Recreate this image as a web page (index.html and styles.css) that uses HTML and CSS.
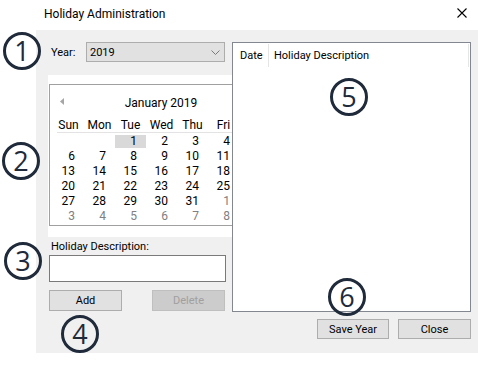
FILE: index.html
```html
<!DOCTYPE html>
<html>
<head>
<meta charset="utf-8">
<link rel="stylesheet" href="styles.css">
</head>
<body>
<div class="window">
  <div class="titlebar">
    <span class="title">Holiday Administration</span>
    <svg class="close-x" width="10" height="10" viewBox="0 0 10 10"><path d="M0.5 0.5 L9.5 9.5 M9.5 0.5 L0.5 9.5" stroke="#000" stroke-width="1.1" fill="none"/></svg>
  </div>
  <div class="panel">
    <div class="main">
      <div class="left">
        <div class="year-row">
          <span class="year-label">Year:</span>
          <div class="combo">
            <span class="combo-value">2019</span>
            <svg class="chevron" width="9" height="5" viewBox="0 0 9 5"><path d="M0.5 0.5 L4.5 4.5 L8.5 0.5" stroke="#7a7a7a" stroke-width="1" fill="none"/></svg>
          </div>
        </div>
        <div class="cal-area">
          <div class="calendar">
            <div class="cal-head">
              <svg class="prev" width="4" height="7" viewBox="0 0 4 7"><path d="M4 0 L0 3.5 L4 7 Z" fill="#a6a6a6"/></svg>
              <span class="month">January 2019</span>
            </div>
            <div class="names">
              <span>Sun</span><span>Mon</span><span>Tue</span><span>Wed</span><span>Thu</span><span>Fri</span>
            </div>
            <div class="days">
              <span></span><span></span><span class="sel">1</span><span>2</span><span>3</span><span>4</span>
              <span>6</span><span>7</span><span>8</span><span>9</span><span>10</span><span>11</span>
              <span>13</span><span>14</span><span>15</span><span>16</span><span>17</span><span>18</span>
              <span>20</span><span>21</span><span>22</span><span>23</span><span>24</span><span>25</span>
              <span>27</span><span>28</span><span>29</span><span>30</span><span>31</span><span class="trail">1</span>
              <span class="trail">3</span><span class="trail">4</span><span class="trail">5</span><span class="trail">6</span><span class="trail">7</span><span class="trail">8</span>
            </div>
          </div>
        </div>
        <div class="desc-label">Holiday Description:</div>
        <div class="textbox"></div>
        <div class="btn-row">
          <div class="btn">Add</div>
          <div class="btn disabled">Delete</div>
        </div>
      </div>
      <div class="listview">
        <div class="lv-header">
          <span class="col-date">Date</span>
          <span class="col-desc">Holiday Description</span>
        </div>
      </div>
    </div>
    <div class="footer">
      <div class="btn btn-save">Save Year</div>
      <div class="btn btn-close">Close</div>
    </div>
  </div>
  <div class="marker m1">1</div>
  <div class="marker m2">2</div>
  <div class="marker m3">3</div>
  <div class="marker m4">4</div>
  <div class="marker m5">5</div>
  <div class="marker m6">6</div>
</div>
</body>
</html>
```
FILE: styles.css
```css
* { box-sizing: border-box; }
html, body { margin: 0; padding: 0; background: #fff; }
body {
  font-family: Roboto, "Liberation Sans", sans-serif;
  font-size: 11px;
  color: #000;
}
.window {
  position: relative;
  width: 478px;
  height: 366px;
  overflow: hidden;
  background: #fff;
}
.titlebar {
  height: 30px;
  display: flex;
  align-items: center;
  justify-content: space-between;
  padding: 0 11px 2px 44px;
}
.title { font-size: 12px; }
.close-x { margin-top: -2px; }

.panel {
  margin-left: 36px;
  width: 442px;
  height: 323px;
  background: #f0f0f0;
  padding: 12px 0 0 12px;
}
.main { display: flex; height: 270px; }
.left { width: 184px; overflow: hidden; }

.year-row { display: flex; align-items: center; height: 20px; }
.year-label { width: 38px; padding-left: 3px; }
.combo {
  width: 139px;
  height: 20px;
  background: #e1e1e1;
  border: 1px solid #adadad;
  display: flex;
  align-items: center;
  justify-content: space-between;
  padding: 0 4px 0 3px;
}
.chevron { margin-top: 1px; }

.cal-area {
  margin-top: 13px;
  height: 162px;
  background: #fff;
  padding: 9px 0 0 1px;
  overflow: hidden;
}
.calendar {
  width: 224px;
  height: 142px;
  border: 1px solid #a0a0a0;
  padding: 0 3px;
}
.cal-head {
  height: 34px;
  position: relative;
  display: flex;
  align-items: center;
  justify-content: center;
}
.prev { position: absolute; left: 7px; top: 13px; }
.month { font-size: 12px; margin-top: 2px; }
.names {
  display: grid;
  grid-template-columns: 27px repeat(5, 31px);
  height: 14px;
  margin-left: 4px;
  border-bottom: 1px solid #e3e3e3;
  font-size: 12px;
  line-height: 12px;
}
.names span { text-align: center; }
.names span:first-child { margin-left: -4px; }
.days {
  display: grid;
  grid-template-columns: repeat(6, 31px);
  grid-auto-rows: 15px;
  padding-top: 1px;
  font-size: 12px;
}
.days span {
  text-align: right;
  padding-right: 9px;
  line-height: 15px;
}
.days span.sel {
  background: #d9d9d9;
  border-top: 1px solid #fff;
  border-bottom: 1px solid #fff;
  line-height: 13px;
}
.days span.trail { color: #808080; }

.desc-label { height: 18px; padding: 4px 0 0 3px; line-height: 12px; }
.textbox {
  width: 177px;
  height: 27px;
  margin-left: 1px;
  background: #fff;
  border: 1px solid #7a7a7a;
}
.btn-row { display: flex; gap: 30px; margin-top: 8px; padding-left: 1px; }
.btn {
  width: 73px;
  height: 21px;
  background: #e1e1e1;
  border: 1px solid #adadad;
  display: flex;
  align-items: center;
  justify-content: center;
}
.btn.disabled { background: #cccccc; border-color: #bfbfbf; color: #a0a0a0; }

.listview {
  width: 239px;
  height: 270px;
  background: #fff;
  border: 1px solid #828790;
}
.lv-header { display: flex; height: 25px; align-items: stretch; }
.lv-header span { display: flex; align-items: center; border-right: 1px solid #e5e5e5; margin: 1px 0; }
.col-date { width: 36px; padding-left: 7px; }
.col-desc { width: 200px; padding-left: 5px; }

.footer {
  display: flex;
  justify-content: flex-end;
  gap: 9px;
  margin-top: 7px;
  padding-right: 7px;
}
.btn-save { width: 72px; height: 20px; }
.btn-close { width: 73px; height: 20px; }

.marker {
  position: absolute;
  width: 38px;
  height: 38px;
  border: 3px solid #1f2a3a;
  border-radius: 50%;
  color: #1f2a3a;
  font-family: "Open Sans", "Noto Sans", sans-serif;
  font-size: 27px;
  line-height: 32px;
  text-align: center;
}
.m1 { left: 3px; top: 32px; }
.m2 { left: 2px; top: 142px; }
.m3 { left: 4px; top: 242px; }
.m4 { left: 61px; top: 315px; }
.m5 { left: 330px; top: 78px; }
.m6 { left: 328px; top: 278px; }
```
